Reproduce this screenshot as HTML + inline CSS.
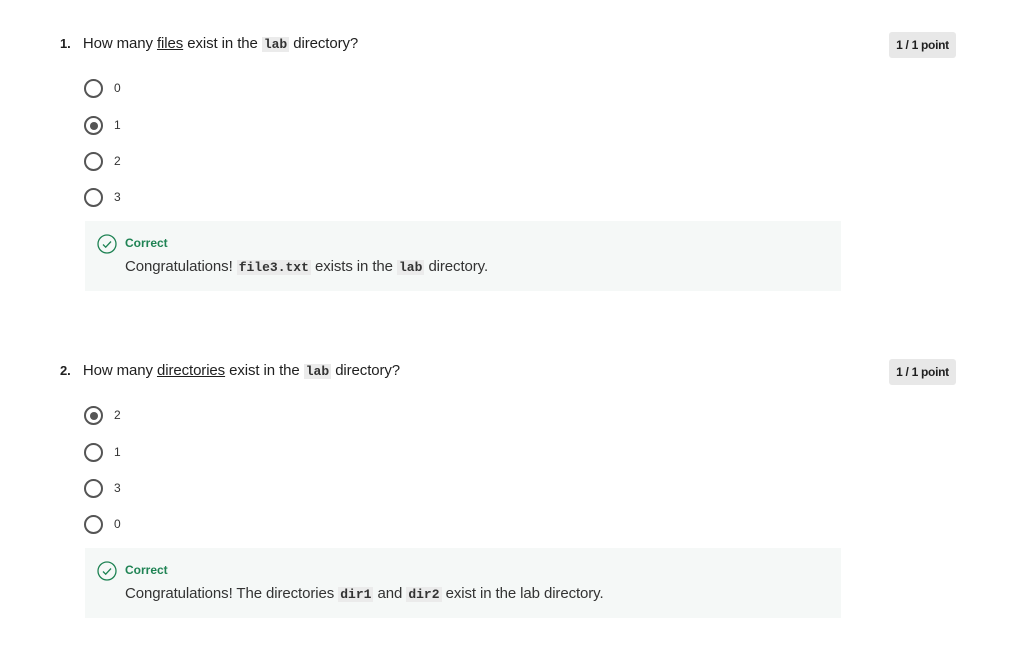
<!DOCTYPE html>
<html><head><style>
body{margin:0;width:1019px;height:670px;background:#fff;font-family:"Liberation Sans",sans-serif;color:#1f1f1f;position:relative;overflow:hidden}
.a{position:absolute;white-space:nowrap}
.q{font-size:15px;letter-spacing:-0.1px;line-height:18px}
.num{font-weight:bold;font-size:13px}
code{font-family:"Liberation Mono",monospace;background:#ebebeb;font-size:13px;padding:0 2px;letter-spacing:0;font-weight:bold;color:#333}
.r{position:absolute;width:19px;height:19px;border:2px solid #555;border-radius:50%;box-sizing:border-box;left:84px}
.r.on::after{content:"";position:absolute;left:3.5px;top:3.5px;width:8px;height:8px;border-radius:50%;background:#555}
.l{position:absolute;left:114px;font-size:12px;color:#333}
.fb{position:absolute;left:85px;width:756px;height:70px;background:#f5f8f7}
.ck{position:absolute;left:12px;top:13px}
.ct{position:absolute;left:40px;top:15px;font-size:12px;font-weight:bold;color:#1f8354}
.ft{position:absolute;left:40px;top:37px;font-size:15px;letter-spacing:-0.1px;color:#333}
.badge{position:absolute;left:889px;width:67px;height:26px;background:#e8e8e8;border-radius:3px;font-size:12px;font-weight:bold;text-align:center;line-height:26px;letter-spacing:-0.3px}
</style></head><body>
<div class="a q" style="left:60px;top:35px"><span class="num">1.</span>&nbsp;&nbsp; How many <u>files</u> exist in the <code>lab</code> directory?</div>
<div class="badge" style="top:32px">1 / 1 point</div>
<div class="r" style="top:79px"></div><div class="l" style="top:81px">0</div>
<div class="r on" style="top:116px"></div><div class="l" style="top:118px">1</div>
<div class="r" style="top:152px"></div><div class="l" style="top:154px">2</div>
<div class="r" style="top:188px"></div><div class="l" style="top:190px">3</div>
<div class="fb" style="top:221px">
<svg class="ck" width="20" height="20" viewBox="0 0 20 20"><circle cx="10" cy="10" r="9" fill="none" stroke="#1f8354" stroke-width="1.3"/><path d="M6 10.5l2.7 2.7L14 7.5" fill="none" stroke="#1f8354" stroke-width="1.3"/></svg>
<div class="ct">Correct</div>
<div class="ft">Congratulations! <code>file3.txt</code> exists in the <code>lab</code> directory.</div>
</div>

<div class="a q" style="left:60px;top:362px"><span class="num">2.</span>&nbsp;&nbsp; How many <u>directories</u> exist in the <code>lab</code> directory?</div>
<div class="badge" style="top:359px">1 / 1 point</div>
<div class="r on" style="top:406px"></div><div class="l" style="top:408px">2</div>
<div class="r" style="top:443px"></div><div class="l" style="top:445px">1</div>
<div class="r" style="top:479px"></div><div class="l" style="top:481px">3</div>
<div class="r" style="top:515px"></div><div class="l" style="top:517px">0</div>
<div class="fb" style="top:548px">
<svg class="ck" width="20" height="20" viewBox="0 0 20 20"><circle cx="10" cy="10" r="9" fill="none" stroke="#1f8354" stroke-width="1.3"/><path d="M6 10.5l2.7 2.7L14 7.5" fill="none" stroke="#1f8354" stroke-width="1.3"/></svg>
<div class="ct">Correct</div>
<div class="ft">Congratulations! The directories <code>dir1</code> and <code>dir2</code> exist in the lab directory.</div>
</div>
</body></html>
